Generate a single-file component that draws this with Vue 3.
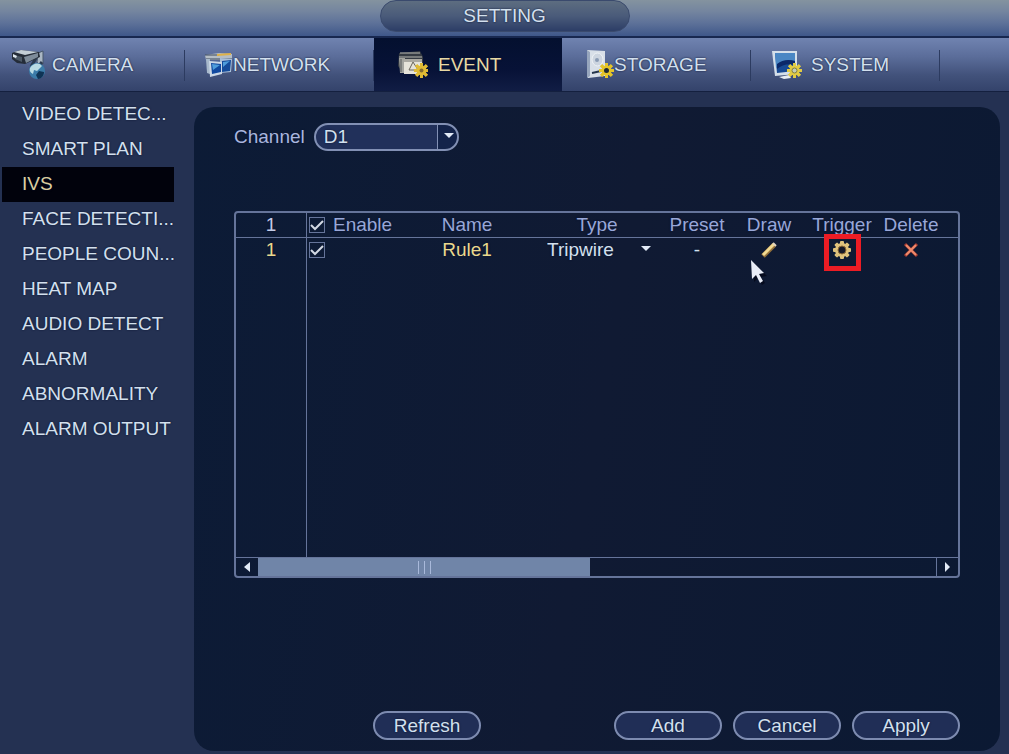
<script setup>
import { ref } from 'vue'

const tabs = [
  { id: 'camera', label: 'CAMERA', slot: 'wide' },
  { id: 'network', label: 'NETWORK', slot: 'tight' },
  { id: 'event', label: 'EVENT', slot: 'wide' },
  { id: 'storage', label: 'STORAGE', slot: 'tight' },
  { id: 'system', label: 'SYSTEM', slot: 'wide' }
]
const activeTab = ref('event')

const sections = [
  'VIDEO DETEC...', 'SMART PLAN', 'IVS', 'FACE DETECTI...', 'PEOPLE COUN...',
  'HEAT MAP', 'AUDIO DETECT', 'ALARM', 'ABNORMALITY', 'ALARM OUTPUT'
]
const activeSection = ref('IVS')

const channel = ref('D1')
const allEnabled = ref(true)
const rule = ref({ enabled: true, name: 'Rule1', type: 'Tripwire', preset: '-' })
</script>

<template>
  <div class="screen">
    <header class="titlebar">
      <h1 class="title">SETTING</h1>
    </header>

    <nav class="tabs" aria-label="Settings">
      <a
        v-for="tab in tabs"
        :key="tab.id"
        href="#"
        class="tab"
        :class="[tab.id, { active: tab.id === activeTab }]"
        @click.prevent="activeTab = tab.id"
      >
        <span class="slot" :class="tab.slot">
          <svg v-if="tab.id === 'camera'" width="34" height="32" viewBox="0 0 34 32" aria-hidden="true">
            <path d="M26 4l5-2v13l-4 1-2-3z" fill="#aab7c4" stroke="#46566a" />
            <path d="M24 9l-4 7 6 2 4-5" fill="none" stroke="#2b3a4f" stroke-width="3" />
            <path d="M0 4l8-3 19 2 1 5-15 7-8-1-5-4z" fill="#242c38" />
            <path d="M2 3l7-2 17 2-13 3z" fill="#c3ced6" />
            <path d="M12 8l14-4v4l-12 6z" fill="#7d8b99" />
            <path d="M2 6l8 2v5l-7-3z" fill="#4c5967" />
            <path d="M1 5l4 2-1 2-3-1z" fill="#dfe8ee" />
            <circle cx="25" cy="22" r="8" fill="#3b7ba8" />
            <path d="M18 19c3-5 9-6 12-2l-5 5-3-1-1 4c-2-1-4-3-3-6z" fill="#b9dbe4" />
            <path d="M27 22l5 1c0 4-3 7-6 7l-2-4z" fill="#0f3455" />
          </svg>
          <svg v-else-if="tab.id === 'network'" width="28" height="26" viewBox="0 0 28 26" aria-hidden="true">
            <path d="M0 3l14-2 13 1v6H1z" fill="#b4bdc5" />
            <path d="M0 3h14M1 7h26" stroke="#3c4b60" />
            <path d="M12 2l14-1v2l-14 1z" fill="#dfb248" />
            <path d="M1 7h4v15l-3-1z" fill="#a8b9cc" />
            <path d="M15 6l12 1-1 13-11 1z" fill="#a9bfd8" />
            <path d="M17 9l9-1-1 11-8 1z" fill="#154c9b" />
            <path d="M4 9l13 1v12L5 25z" fill="#ccd8e6" />
            <path d="M6 11l10 1v8L7 22z" fill="#1149a0" />
            <path d="M7 12l8 1-7 5zM18 10l7-1-7 6z" fill="#4f9ddb" />
          </svg>
          <svg v-else-if="tab.id === 'event'" width="30" height="29" viewBox="0 0 30 29" aria-hidden="true">
            <path d="M1 3l21-2 3 6v13H3L0 16z" fill="#353b43" />
            <path d="M2 3h20M1 7h23" stroke="#b9bab4" />
            <path d="M1 8h6v15H2z" fill="#a3a49f" />
            <path d="M3 9v13" stroke="#54585b" />
            <path d="M6 9h18v15H6z" fill="#e6e4da" />
            <path d="M6 9h18v3H6z" fill="#aaa9a2" />
            <path d="M15 12l5 8h-9z" fill="none" stroke="#68645c" />
            <g fill="#e0bb35">
              <rect v-for="n in 8" :key="n" x="22" y="13" width="3" height="15" :transform="`rotate(${n * 45} 23.5 20.5)`" />
              <circle cx="23.5" cy="20.5" r="5" />
            </g>
            <circle cx="23.5" cy="20.5" r="2" fill="#856c2d" />
          </svg>
          <svg v-else-if="tab.id === 'storage'" width="28" height="31" viewBox="0 0 28 31" aria-hidden="true">
            <path d="M1 1l18 1v25L2 29z" fill="#d8dfe8" />
            <path d="M1 1l3 2v24l-3 2z" fill="#97a6bd" />
            <ellipse cx="11.500" cy="10.500" rx="5.500" ry="6.500" fill="#cdd5e0" stroke="#eef2f6" />
            <circle cx="11" cy="11" r="2" fill="#8a9bb4" />
            <path d="M6 24l9-2" stroke="#26364d" stroke-width="2" />
            <g fill="#e5c529">
              <rect v-for="n in 8" :key="n" x="19" y="14" width="3" height="15" :transform="`rotate(${n * 45} 20.5 21.5)`" />
              <circle cx="20.5" cy="21.5" r="5" />
            </g>
            <circle cx="20.5" cy="21.5" r="2.500" fill="#1d2935" />
          </svg>
          <svg v-else width="32" height="30" viewBox="0 0 32 30" aria-hidden="true">
            <path d="M1 1h25v23l-22 2z" fill="#d4dfea" />
            <path d="M4 3h20v18L6 23z" fill="#174a94" />
            <path d="M4 3h20v8C15 9 9 13 5 18z" fill="#4a87c4" />
            <path d="M6 14c5-4 11-5 18-3v4c-7-2-13 0-18 4z" fill="#0b2869" />
            <path d="M8 27l10-2 2 3-7 1z" fill="#e7edf2" />
            <g fill="#e2cb43">
              <rect v-for="n in 8" :key="n" x="22" y="13" width="3" height="15" :transform="`rotate(${n * 45} 23.5 20.5)`" />
              <circle cx="23.5" cy="20.5" r="5" />
            </g>
            <circle cx="23.5" cy="20.5" r="2.500" fill="#c4ceb8" stroke="#837e3d" />
          </svg>
        </span>
        <span>{{ tab.label }}</span>
      </a>
    </nav>

    <div class="body">
      <nav class="sidebar" aria-label="Event sections">
        <a
          v-for="section in sections"
          :key="section"
          href="#"
          class="section"
          :class="{ active: section === activeSection }"
          @click.prevent="activeSection = section"
        >{{ section }}</a>
      </nav>

      <main class="panel">
        <div class="channel">
          <label for="channel">Channel</label>
          <span class="dropdown">
            <select id="channel" v-model="channel">
              <option>D1</option>
              <option>D2</option>
            </select>
            <svg class="arrow" width="10" height="6" viewBox="0 0 10 6" aria-hidden="true"><path d="M0 0h10L5 5z" /></svg>
          </span>
        </div>

        <div class="frame">
          <table class="rules">
            <colgroup>
              <col class="c-index"><col class="c-enable"><col class="c-name"><col class="c-type"><col class="c-preset">
              <col class="c-draw"><col class="c-trigger"><col class="c-delete"><col class="c-rest">
            </colgroup>
            <thead>
              <tr>
                <th>1</th>
                <th class="enable">
                  <label class="check">
                    <input v-model="allEnabled" type="checkbox">
                    <svg class="tick" width="16" height="16" viewBox="0 0 16 16" aria-hidden="true"><path d="M2 8l4 4 8-8" /></svg>
                    <span>Enable</span>
                  </label>
                </th>
                <th>Name</th>
                <th>Type</th>
                <th>Preset</th>
                <th>Draw</th>
                <th>Trigger</th>
                <th>Delete</th>
                <th></th>
              </tr>
            </thead>
            <tbody>
              <tr class="rule">
                <td class="highlight">1</td>
                <td class="enable">
                  <label class="check">
                    <input v-model="rule.enabled" type="checkbox" aria-label="Enable Rule1">
                    <svg class="tick" width="16" height="16" viewBox="0 0 16 16" aria-hidden="true"><path d="M2 8l4 4 8-8" /></svg>
                  </label>
                </td>
                <td class="highlight">{{ rule.name }}</td>
                <td>
                  <span class="type">
                    <select v-model="rule.type" aria-label="Type">
                      <option>Tripwire</option>
                      <option>Intrusion</option>
                    </select>
                    <svg class="arrow" width="10" height="6" viewBox="0 0 10 6" aria-hidden="true"><path d="M0 0h10L5 5z" /></svg>
                  </span>
                </td>
                <td>{{ rule.preset }}</td>
                <td class="anchor">
                  <button class="icon" type="button" aria-label="Draw">
                    <svg width="18" height="18" viewBox="0 0 18 18" aria-hidden="true">
                      <path d="M3 15l11-11" stroke="#95713a" stroke-width="5" />
                      <path d="M3 14L14 3" stroke="#f1d991" stroke-width="3" />
                      <path d="M13 2l3 3" stroke="#e2d4bf" stroke-width="2" />
                    </svg>
                  </button>
                  <svg class="pointer" width="18" height="26" viewBox="0 0 18 26" aria-hidden="true">
                    <path d="M3 3l13 13-6 1 4 6-3 2-4-7-4 4z" fill="#050a1d" />
                    <path d="M0 0l13 13-5 1 4 7-3 2-4-8-4 4z" fill="#e9edf7" />
                  </svg>
                </td>
                <td class="anchor">
                  <button class="icon" type="button" aria-label="Trigger">
                    <svg width="20" height="20" viewBox="0 0 20 20" aria-hidden="true">
                      <g fill="#dfc27c">
                        <rect v-for="n in 4" :key="n" x="8" y="1" width="4" height="18" rx="1" :transform="`rotate(${n * 45} 10 10)`" />
                        <circle cx="10" cy="10" r="7" />
                      </g>
                      <circle cx="10" cy="10" r="4" fill="#161827" stroke="#8b6836" />
                    </svg>
                  </button>
                  <span class="marker"></span>
                </td>
                <td>
                  <button class="icon" type="button" aria-label="Delete">
                    <svg width="16" height="16" viewBox="0 0 16 16" aria-hidden="true">
                      <path d="M2 2l12 12M14 2L2 14" stroke="#a93c31" stroke-width="3" />
                      <path d="M3 3l10 10M13 3L3 13" stroke="#ef8b6c" stroke-width="2" />
                    </svg>
                  </button>
                </td>
                <td></td>
              </tr>
              <tr class="filler">
                <td></td>
                <td colspan="8"></td>
              </tr>
            </tbody>
          </table>
          <div class="scrollbar">
            <button type="button" class="step" aria-label="Scroll left">
              <svg width="6" height="10" viewBox="0 0 6 10" aria-hidden="true"><path d="M6 0v10L0 5z" /></svg>
            </button>
            <div class="track">
              <div class="thumb"><i></i><i></i><i></i></div>
            </div>
            <button type="button" class="step right" aria-label="Scroll right">
              <svg width="6" height="10" viewBox="0 0 6 10" aria-hidden="true"><path d="M0 0v10l5-5z" /></svg>
            </button>
          </div>
        </div>

        <div class="actions">
          <button type="button" class="pill refresh">Refresh</button>
          <button type="button" class="pill">Add</button>
          <button type="button" class="pill">Cancel</button>
          <button type="button" class="pill">Apply</button>
        </div>
      </main>
    </div>
  </div>
</template>

<style>
body {
  margin: 0;
  background: #243152;
}
</style>

<style scoped>
* {
  box-sizing: border-box;
}

.screen {
  display: flex;
  flex-direction: column;
  min-height: 100vh;
  background: #243152;
  color: #d3e0ee;
  font-family: "Liberation Sans", Arial, sans-serif;
  font-size: 19px;
  line-height: 24px;
  text-shadow: 0 0 2px #0a1230;
}

a {
  color: inherit;
  text-decoration: none;
}

button,
select {
  margin: 0;
  padding: 0;
  border: 0;
  background: none;
  color: inherit;
  font: inherit;
  text-shadow: inherit;
}

select {
  appearance: none;
  outline: 0;
}

svg {
  display: block;
}

.titlebar {
  height: 38px;
  background: linear-gradient(#84939f 0, #74859f 30%, #5e7299 60%, #40588a 94%, #182850 96%);
}

.title {
  width: 250px;
  height: 32px;
  margin: 0 auto;
  border: 1px solid #3a4a6d;
  border-radius: 16px;
  background: linear-gradient(#5d6d80, #4a5b7a 50%, #2c3d66);
  font-size: 19px;
  font-weight: 400;
  line-height: 30px;
  text-align: center;
}

.tabs {
  display: grid;
  grid-template-columns: 185fr 189fr 188fr 189fr 189fr 69fr;
  height: 54px;
  border-bottom: 1px solid #14203f;
  background: linear-gradient(#7083b0, #5b6d9a 35%, #42527b 70%, #34436b);
}

.tab {
  position: relative;
  display: flex;
  align-items: center;
  padding-left: 24px;
}

.tab.camera {
  padding-left: 12px;
}

.tab.network,
.tab.system {
  padding-left: 20px;
}

.tab:not(.active)::after {
  content: "";
  position: absolute;
  right: 0;
  top: 12px;
  bottom: 10px;
  width: 1px;
  background: #2c3b60;
}

.tab.active {
  background: linear-gradient(#04102f, #071237 60%, #111d44);
  color: #e8d9a4;
}

.slot.wide {
  width: 40px;
}

.slot.tight {
  width: 28px;
}

.body {
  display: flex;
  flex: 1;
  padding: 5px 9px 3px 2px;
}

.sidebar {
  width: 192px;
  flex: none;
}

.section {
  display: block;
  width: 172px;
  height: 35px;
  padding-left: 20px;
  line-height: 33px;
  white-space: nowrap;
}

.section.active {
  background: #01020c;
  color: #dccf9f;
}

.panel {
  display: flex;
  flex: 1;
  flex-direction: column;
  min-width: 0;
  margin-top: 10px;
  padding: 16px 40px 11px;
  border-radius: 20px;
  background: linear-gradient(100deg, #0c1b36, #101a33 50%, #0b1933);
}

.channel {
  display: flex;
  align-items: center;
  gap: 9px;
  color: #a9b6df;
}

.dropdown {
  position: relative;
  width: 145px;
}

.dropdown select {
  display: block;
  width: 100%;
  height: 28px;
  padding-left: 8px;
  border: 2px solid #8290b4;
  border-radius: 14px;
  background: linear-gradient(90deg, #21305a 0 121px, #8290b4 121px 122px, #13234a 122px);
  color: #d3e0ee;
}

.arrow {
  position: absolute;
  top: 10px;
  right: 5px;
  fill: #e2eaf6;
  pointer-events: none;
}

.frame {
  display: flex;
  flex: 1;
  flex-direction: column;
  margin-top: 60px;
  border: 2px solid #65749a;
  border-radius: 4px;
}

.rules {
  flex: 1;
  width: 100%;
  table-layout: fixed;
  border-collapse: separate;
  border-spacing: 0;
}

.c-index { width: 71px; }
.c-enable { width: 100px; }
.c-name { width: 120px; }
.c-type { width: 140px; }
.c-preset { width: 60px; }
.c-draw { width: 84px; }
.c-trigger { width: 62px; }
.c-delete { width: 76px; }
.c-rest { width: 9px; }

th,
td {
  height: 24px;
  padding: 0;
  font-weight: 400;
  text-align: center;
  white-space: nowrap;
}

th {
  border-bottom: 1px solid #65749a;
  color: #98a7d8;
}

th:first-child {
  color: #c3cbe6;
}

th:first-child,
td:first-child {
  border-right: 1px solid #65749a;
}

.filler td {
  height: auto;
}

.highlight {
  color: #ead98d;
}

.check {
  position: relative;
  display: flex;
  align-items: center;
  gap: 8px;
  height: 24px;
  padding-left: 2px;
}

.check input {
  appearance: none;
  width: 16px;
  height: 16px;
  margin: 0;
  border: 1px solid #65749a;
}

.tick {
  position: absolute;
  left: 2px;
  top: 4px;
  fill: none;
  stroke: #d3d9e4;
  stroke-width: 2;
  visibility: hidden;
  pointer-events: none;
}

.check input:checked + .tick {
  visibility: visible;
}

.type {
  position: relative;
  display: block;
  width: 104px;
  margin-left: 20px;
}

.type select {
  display: block;
  width: 100%;
  height: 24px;
}

.type .arrow {
  top: 8px;
  right: 0;
}

.anchor {
  position: relative;
}

.icon {
  display: block;
  margin: 0 auto;
}

.pointer {
  position: absolute;
  left: 24px;
  top: 22px;
}

.marker {
  position: absolute;
  left: 50%;
  top: 50%;
  width: 37px;
  height: 37px;
  margin: -16px 0 0 -18px;
  border: 5px solid #ec1c24;
  pointer-events: none;
}

.scrollbar {
  display: flex;
  height: 19px;
  border-top: 1px solid #65749a;
}

.step {
  display: flex;
  flex: none;
  align-items: center;
  justify-content: center;
  width: 22px;
  fill: #e2eaf6;
}

.step.right {
  border-left: 1px solid #65749a;
}

.track {
  flex: 1;
}

.thumb {
  display: flex;
  align-items: center;
  justify-content: center;
  gap: 5px;
  width: 49%;
  height: 100%;
  background: #7085a8;
}

.thumb i {
  width: 1px;
  height: 13px;
  background: #a9b9da;
}

.actions {
  display: flex;
  gap: 11px;
  margin-top: 133px;
  padding-left: 139px;
}

.pill {
  width: 108px;
  height: 29px;
  border: 2px solid #7d8bb0;
  border-radius: 15px;
  background: #202e56;
  line-height: 24px;
}

.refresh {
  margin-right: auto;
}
</style>
